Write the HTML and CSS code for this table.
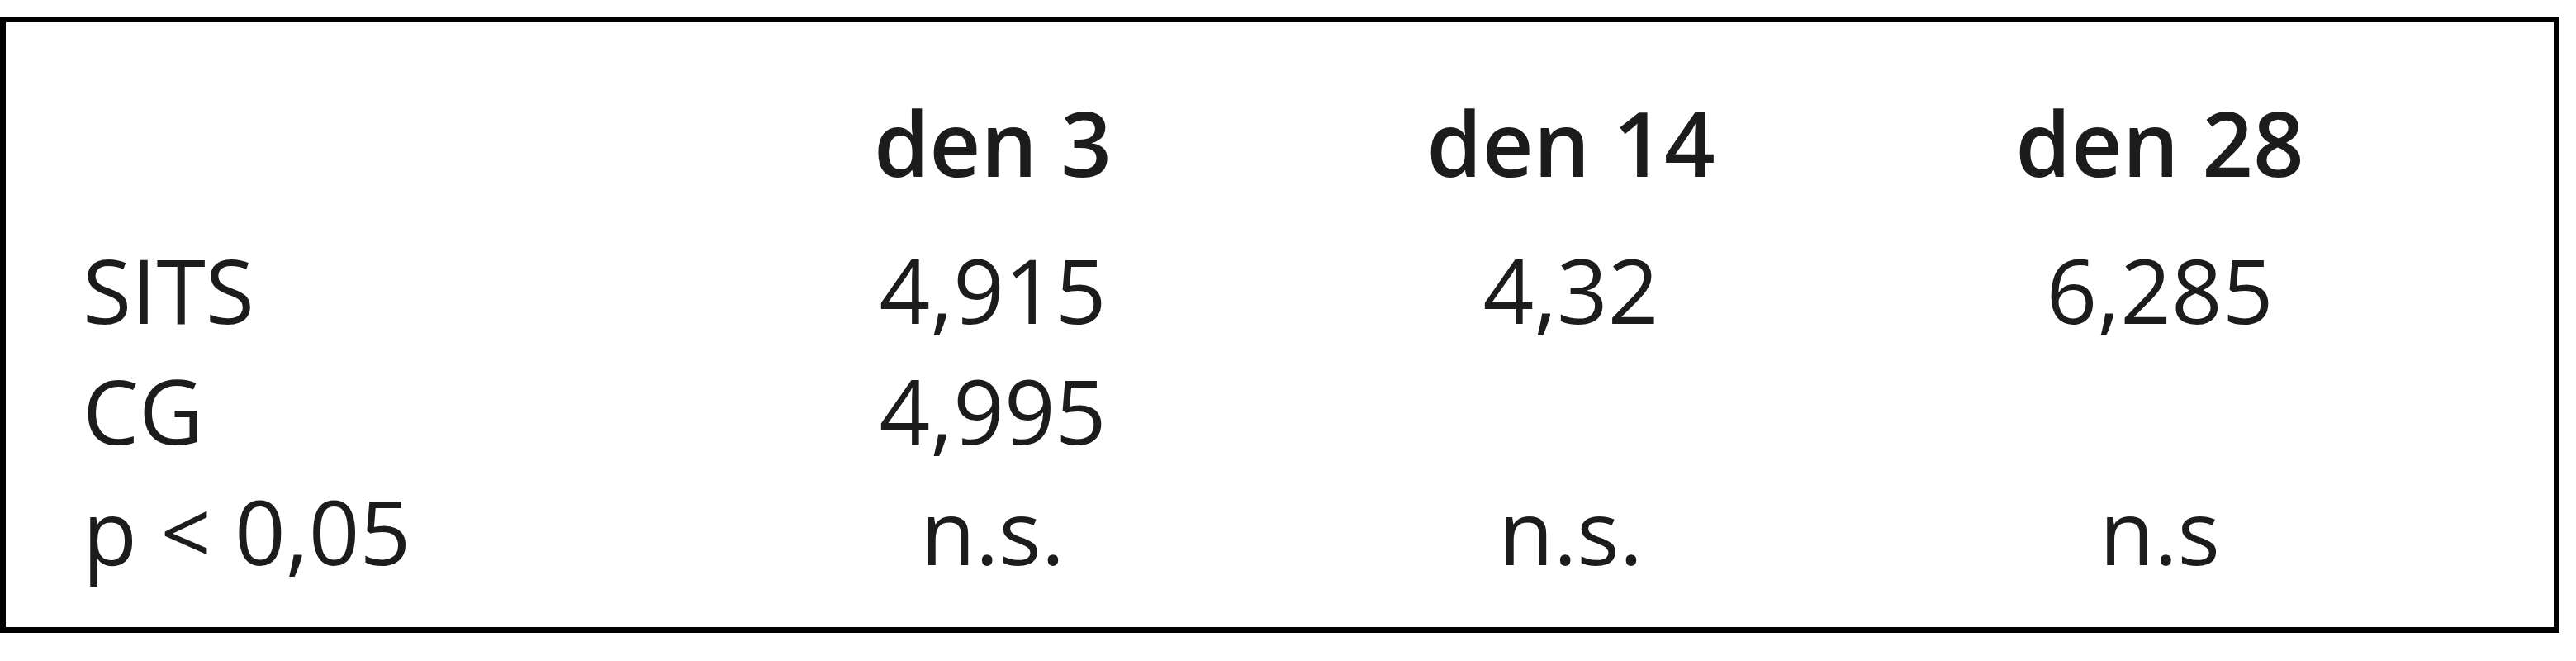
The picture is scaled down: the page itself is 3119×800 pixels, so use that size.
FILE: index.html
```html
<!DOCTYPE html>
<html lang="cs">
<head>
<meta charset="utf-8">
<title>Tabulka</title>
<link rel="stylesheet" href="styles.css">
</head>
<body>
<div class="box">
  <div class="grid">
    <div class="row head">
      <div class="cell label"></div>
      <div class="cell">den 3</div>
      <div class="cell">den 14</div>
      <div class="cell">den 28</div>
    </div>
    <div class="row">
      <div class="cell label">SITS</div>
      <div class="cell">4,915</div>
      <div class="cell">4,32</div>
      <div class="cell">6,285</div>
    </div>
    <div class="row">
      <div class="cell label">CG</div>
      <div class="cell">4,995</div>
      <div class="cell"></div>
      <div class="cell"></div>
    </div>
    <div class="row">
      <div class="cell label">p &lt; 0,05</div>
      <div class="cell">n.s.</div>
      <div class="cell">n.s.</div>
      <div class="cell">n.s</div>
    </div>
  </div>
</div>
</body>
</html>
```
FILE: styles.css
```css
html, body {
  margin: 0;
  padding: 0;
  background: #ffffff;
}
body {
  width: 3119px;
  height: 800px;
  overflow: hidden;
  font-family: "Open Sans", "Liberation Sans", sans-serif;
  color: #1c1c1c;
}
.box {
  box-sizing: border-box;
  margin-top: 20px;
  width: 3099px;
  height: 746px;
  border: 7px solid #000000;
  padding: 73px 0 0 93px;
}
.row {
  display: grid;
  grid-template-columns: 752px 700px 700px 726px;
  font-size: 108px;
  line-height: 146px;
  height: 146px;
}
.row.head {
  font-weight: 600;
  margin-bottom: 32px;
}
.cell {
  text-align: center;
  white-space: nowrap;
}
.cell.label {
  text-align: left;
}
```
